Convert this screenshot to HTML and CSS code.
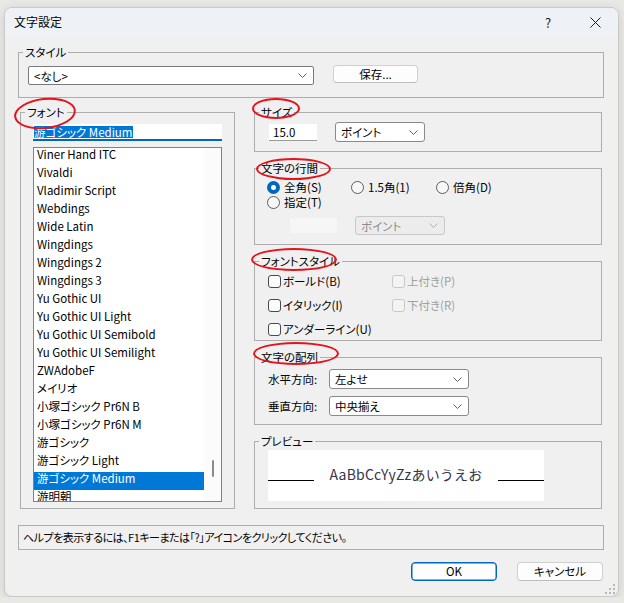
FILE: index.html
```html
<!DOCTYPE html>
<html lang="ja">
<head>
<meta charset="utf-8">
<title>文字設定</title>
<link rel="stylesheet" href="styles.css">
</head>
<body>
<div class="window">
  <div class="titlebar">
    <span class="title">文字設定</span>
    <span class="tb-btn tb-help">?</span>
    <span class="tb-btn tb-close"><svg width="11" height="11" viewBox="0 0 11 11"><path d="M0.5 0.5 L10.5 10.5 M10.5 0.5 L0.5 10.5" stroke="#1a1a1a" stroke-width="1" fill="none"/></svg></span>
  </div>
  <div class="content">
    <div class="group style-group">
      <span class="glabel">スタイル</span>
      <div class="combo style-combo"><span>&lt;なし&gt;</span><svg class="chev" width="9" height="5" viewBox="0 0 9 5"><polyline points="0.5,0.5 4.5,4.5 8.5,0.5" fill="none" stroke="#606060" stroke-width="1"/></svg></div>
      <button class="btn save">保存...</button>
    </div>

    <div class="main">
      <div class="group font-group">
        <span class="glabel">フォント</span>
        <div class="font-edit"><span class="sel">游ゴシック Medium</span></div>
        <div class="list">
          <div class="items">
            <div class="item">Viner Hand ITC</div>
            <div class="item">Vivaldi</div>
            <div class="item">Vladimir Script</div>
            <div class="item">Webdings</div>
            <div class="item">Wide Latin</div>
            <div class="item">Wingdings</div>
            <div class="item">Wingdings 2</div>
            <div class="item">Wingdings 3</div>
            <div class="item">Yu Gothic UI</div>
            <div class="item">Yu Gothic UI Light</div>
            <div class="item">Yu Gothic UI Semibold</div>
            <div class="item">Yu Gothic UI Semilight</div>
            <div class="item">ZWAdobeF</div>
            <div class="item">メイリオ</div>
            <div class="item">小塚ゴシック Pr6N B</div>
            <div class="item">小塚ゴシック Pr6N M</div>
            <div class="item">游ゴシック</div>
            <div class="item">游ゴシック Light</div>
            <div class="item selected">游ゴシック Medium</div>
            <div class="item">游明朝</div>
          </div>
          <div class="track"><div class="thumb"></div></div>
        </div>
      </div>

      <div class="rightcol">
        <div class="group size-group">
          <span class="glabel">サイズ</span>
          <div class="edit size-edit">15.0</div>
          <div class="combo unit-combo"><span>ポイント</span><svg class="chev" width="9" height="5" viewBox="0 0 9 5"><polyline points="0.5,0.5 4.5,4.5 8.5,0.5" fill="none" stroke="#606060" stroke-width="1"/></svg></div>
        </div>

        <div class="group spacing-group">
          <span class="glabel">文字の行間</span>
          <div class="radio-row">
            <label class="radio"><span class="rc on"></span>全角(S)</label>
            <label class="radio r2"><span class="rc"></span>1.5角(1)</label>
            <label class="radio"><span class="rc"></span>倍角(D)</label>
          </div>
          <div class="radio-row">
            <label class="radio"><span class="rc"></span>指定(T)</label>
          </div>
          <div class="disabled-row">
            <div class="edit dis-edit"></div>
            <div class="combo dis-combo"><span>ポイント</span><svg class="chev" width="9" height="5" viewBox="0 0 9 5"><polyline points="0.5,0.5 4.5,4.5 8.5,0.5" fill="none" stroke="#b0b0b0" stroke-width="1"/></svg></div>
          </div>
        </div>

        <div class="group style2-group">
          <span class="glabel">フォントスタイル</span>
          <div class="check-row">
            <label class="check"><span class="cb"></span>ボールド(B)</label>
            <label class="check disabled"><span class="cb"></span>上付き(P)</label>
          </div>
          <div class="check-row">
            <label class="check"><span class="cb"></span>イタリック(I)</label>
            <label class="check disabled"><span class="cb"></span>下付き(R)</label>
          </div>
          <div class="check-row">
            <label class="check"><span class="cb"></span>アンダーライン(U)</label>
          </div>
        </div>

        <div class="group align-group">
          <span class="glabel">文字の配列</span>
          <div class="align-row">
            <span class="align-label">水平方向:</span>
            <div class="combo align-combo"><span>左よせ</span><svg class="chev" width="9" height="5" viewBox="0 0 9 5"><polyline points="0.5,0.5 4.5,4.5 8.5,0.5" fill="none" stroke="#606060" stroke-width="1"/></svg></div>
          </div>
          <div class="align-row">
            <span class="align-label">垂直方向:</span>
            <div class="combo align-combo"><span>中央揃え</span><svg class="chev" width="9" height="5" viewBox="0 0 9 5"><polyline points="0.5,0.5 4.5,4.5 8.5,0.5" fill="none" stroke="#606060" stroke-width="1"/></svg></div>
          </div>
        </div>

        <div class="group preview-group">
          <span class="glabel">プレビュー</span>
          <div class="preview">
            <div class="pline"></div>
            <div class="ptext">AaBbCcYyZzあいうえお</div>
            <div class="pline"></div>
          </div>
        </div>
      </div>
    </div>

    <div class="helpbox">ヘルプを表示するには、F1キーまたは「?」アイコンをクリックしてください。</div>

    <div class="buttons">
      <button class="btn ok">OK</button>
      <button class="btn">キャンセル</button>
    </div>
  </div>

  <span class="mark m-font"></span>
  <span class="mark m-size"></span>
  <span class="mark m-spacing"></span>
  <span class="mark m-style"></span>
  <span class="mark m-align"></span>

  <svg class="gripper" width="10" height="10" viewBox="0 0 10 10">
    <rect x="8" y="0" width="2" height="2" fill="#b8b8b8"/>
    <rect x="4" y="4" width="2" height="2" fill="#b8b8b8"/>
    <rect x="8" y="4" width="2" height="2" fill="#b8b8b8"/>
    <rect x="0" y="8" width="2" height="2" fill="#b8b8b8"/>
    <rect x="4" y="8" width="2" height="2" fill="#b8b8b8"/>
    <rect x="8" y="8" width="2" height="2" fill="#b8b8b8"/>
  </svg>
</div>
</body>
</html>
```

FILE: styles.css
```css
* { box-sizing: border-box; }

body {
  margin: 0;
  background: #e8e8e5;
  font-family: "Noto Sans CJK JP", "Noto Sans", sans-serif;
  font-size: 11.5px;
  color: #000;
  font-feature-settings: "palt";
}

.window {
  position: relative;
  margin: 7px 0 0 4px;
  width: 615px;
  height: 590px;
  background: #f0f0f0;
  border: 1px solid #c9c9c9;
  border-radius: 8px;
  overflow: hidden;
  box-shadow: 0 2px 10px rgba(0, 0, 0, 0.12);
}

.titlebar {
  height: 28px;
  display: flex;
  align-items: center;
  background: #eef2f7;
  padding-left: 9px;
}

.title { flex: 1; line-height: 14px; font-size: 12px; }

.tb-btn {
  width: 46px;
  height: 28px;
  display: flex;
  align-items: center;
  justify-content: center;
  font-size: 13px;
  color: #1a1a1a;
}

.tb-help { padding-right: 2px; }

.content { padding: 0 14px 0 13px; }

.group {
  position: relative;
  border: 1px solid #adadad;
}

.glabel {
  position: absolute;
  top: -8px;
  left: 4px;
  padding: 0 2px;
  background: #f0f0f0;
  line-height: 14px;
  white-space: nowrap;
}

/* generic controls */
.combo {
  display: flex;
  align-items: center;
  justify-content: space-between;
  background: #fff;
  border: 1px solid #8a8a8a;
  border-radius: 3px;
  padding: 0 6px 0 5px;
  line-height: 14px;
  white-space: nowrap;
}

.edit {
  background: #fff;
  line-height: 14px;
}

.btn {
  font: inherit;
  font-feature-settings: "palt";
  color: #000;
  background: #fdfdfd;
  border: 1px solid #d0d0d0;
  border-bottom-color: #bdbdbd;
  border-radius: 4px;
  padding: 0;
  line-height: 15px;
}

/* style group */
.style-group {
  margin-top: 16px;
  height: 46px;
  display: flex;
  align-items: flex-start;
  padding: 13px 0 0 9px;
}

.style-combo { width: 286px; height: 19px; border-color: #7a7a7a; border-radius: 2px; }

.save { margin-left: 19px; margin-top: -1px; width: 85px; height: 18px; }

/* main row */
.main { display: flex; margin-top: 14px; }

.font-group {
  margin-left: 2px;
  width: 215px;
  height: 397px;
  padding: 11px 0 0 12px;
}

.font-edit {
  width: 189px;
  height: 17px;
  background: #fff;
  border-bottom: 2px solid #0067c0;
  display: flex;
  align-items: center;
  padding-left: 1px;
}

.sel {
  background: #0078d7;
  color: #fff;
  line-height: 12px;
  white-space: nowrap;
}

.list {
  margin-top: 6px;
  width: 189px;
  height: 355px;
  border: 1px solid #828282;
  background: #fff;
  display: flex;
  overflow: hidden;
}

.items { width: 170px; flex: none; }

.item {
  height: 18px;
  line-height: 13px;
  padding-left: 3px;
  white-space: nowrap;
}

.item.selected { background: #0078d7; color: #fff; }

.track { flex: 1; background: #fbfbfb; }

.thumb {
  margin: 312px 0 0 8px;
  width: 2px;
  height: 17px;
  background: #8a8a8a;
  border-radius: 1px;
}

.rightcol {
  margin-left: 19px;
  width: 348px;
  display: flex;
  flex-direction: column;
}

/* size */
.size-group {
  height: 40px;
  display: flex;
  align-items: center;
  padding: 0 0 0 14px;
}

.size-edit {
  width: 48px;
  height: 17px;
  padding-left: 4px;
  border-bottom: 1px solid #9a9a9a;
  line-height: 16px;
}

.unit-combo { margin-left: 18px; width: 90px; height: 20px; }

/* line spacing */
.spacing-group {
  margin-top: 16px;
  height: 77px;
  padding: 11px 0 0 12px;
}

.radio-row { display: flex; height: 15px; align-items: center; }

.radio { display: flex; align-items: center; width: 84px; height: 15px; line-height: 15px; white-space: nowrap; }
.radio.r2 { width: 85px; }

.rc {
  width: 13px;
  height: 13px;
  border-radius: 50%;
  border: 1px solid #5c5c5c;
  background: #f8f8f8;
  margin-right: 4px;
  flex: none;
}

.rc.on { border: 4px solid #0067c0; background: #fff; }

.disabled-row { display: flex; align-items: center; margin: 6px 0 0 23px; }

.dis-edit { width: 47px; height: 15px; background: #f6f6f6; }

.dis-combo {
  margin-left: 18px;
  width: 90px;
  height: 19px;
  background: #ececec;
  border-color: #c8c8c8;
  color: #8d8d8d;
}

/* font style */
.style2-group {
  margin-top: 16px;
  height: 80px;
  padding: 7px 0 0 13px;
}

.check-row { display: flex; height: 24px; align-items: center; }

.check { display: flex; align-items: center; width: 124px; line-height: 15px; white-space: nowrap; }

.cb {
  width: 13px;
  height: 13px;
  border: 1px solid #4a4a4a;
  border-radius: 3px;
  background: #fbfbfb;
  margin-right: 2px;
  flex: none;
}

.check.disabled { color: #a0a0a0; }
.check.disabled .cb { border-color: #c8c8c8; background: #f4f4f4; }

/* alignment */
.align-group {
  margin-top: 16px;
  height: 68px;
  padding: 11px 0 0 13px;
}

.align-row { display: flex; align-items: center; height: 20px; }
.align-row + .align-row { margin-top: 7px; }

.align-label { width: 61px; line-height: 14px; white-space: nowrap; }

.align-combo { width: 140px; height: 20px; }

/* preview */
.preview-group {
  margin-top: 16px;
  height: 68px;
  padding: 8px 0 0 13px;
}

.preview {
  width: 276px;
  height: 51px;
  background: #fff;
  display: grid;
  grid-template-columns: 46px 1fr 46px;
  align-items: start;
}

.pline { margin-top: 30px; height: 1px; background: #000; }

.ptext {
  margin-top: 16px;
  text-align: center;
  font-size: 14px;
  line-height: 16px;
  color: #34344a;
  font-feature-settings: normal;
  letter-spacing: 0.2px;
  white-space: nowrap;
}

/* help */
.helpbox {
  margin-top: 16px;
  height: 25px;
  border: 1px solid #adadad;
  padding-left: 4px;
  font-size: 11px;
  letter-spacing: -0.5px;
  line-height: 23px;
  white-space: nowrap;
}

.buttons {
  margin-top: 12px;
  display: flex;
  justify-content: flex-end;
  gap: 20px;
  padding-right: 1px;
}

.buttons .btn { width: 86px; height: 19px; }

.btn.ok { border-color: #0067c0; box-shadow: inset 0 0 0 0.5px #0067c0; }

/* red annotation ellipses */
.mark {
  position: absolute;
  border: 2.5px solid #e3141c;
  border-radius: 50%;
}

.m-font { left: 9px; top: 90px; width: 62px; height: 31px; transform: rotate(-6deg); }
.m-size { left: 247px; top: 90px; width: 48px; height: 21px; }
.m-spacing { left: 251px; top: 150px; width: 75px; height: 22px; }
.m-style { left: 246px; top: 240px; width: 86px; height: 23px; }
.m-align { left: 248px; top: 334px; width: 86px; height: 23px; }

.gripper { position: absolute; right: 3px; bottom: 2px; }
```
